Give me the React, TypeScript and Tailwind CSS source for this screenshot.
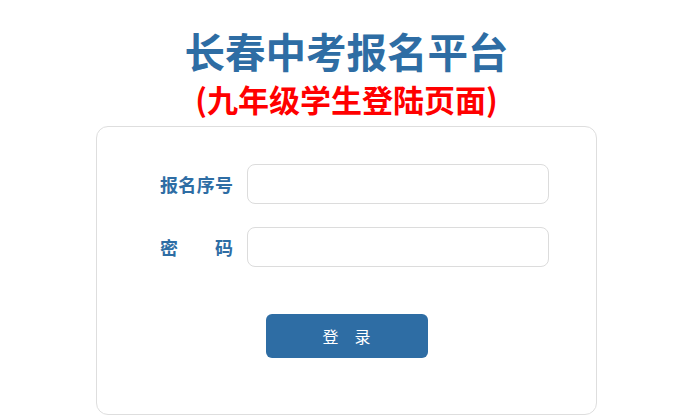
const font = { fontFamily: '"Noto Sans CJK SC", "Noto Sans", sans-serif' };

function Field({ label, type }: { label: string[]; type: string }) {
  return (
    <div className="flex items-center">
      <label className="flex w-[73px] justify-between text-[18px] font-bold leading-none text-[#2e6da4]">
        {label.map((ch, i) => (
          <span key={i}>{ch}</span>
        ))}
      </label>
      <input
        type={type}
        className="ml-[14px] h-[40px] w-[302px] rounded-[8px] border border-[#dcdcdc] bg-white px-3 text-sm outline-none"
      />
    </div>
  );
}

export default function App() {
  return (
    <div className="min-h-[419px] bg-white" style={font}>
      <div className="flex flex-col items-center pl-[5px] pt-[30px]">
        <h1 className="text-[40.5px] font-bold leading-[41px] text-[#2e6da4]">
          长春中考报名平台
        </h1>
        <h2 className="mt-[12px] text-[31px] font-bold leading-[32px] text-[#ff0000]">
          (九年级学生登陆页面)
        </h2>

        <form className="mt-[11px] flex h-[289px] w-[501px] flex-col rounded-[12px] border border-[#dedede] pt-[37px]">
          <div className="flex flex-col gap-[23px] pl-[63px]">
            <Field label={["报", "名", "序", "号"]} type="text" />
            <Field label={["密", "码"]} type="password" />
          </div>
          <div className="mt-[47px] flex justify-center">
            <button
              type="button"
              className="flex h-[44px] w-[162px] items-center justify-center gap-[16px] rounded-[6px] bg-[#2e6da4] text-[16px] text-white"
            >
              <span>登</span>
              <span>录</span>
            </button>
          </div>
        </form>
      </div>
    </div>
  );
}
